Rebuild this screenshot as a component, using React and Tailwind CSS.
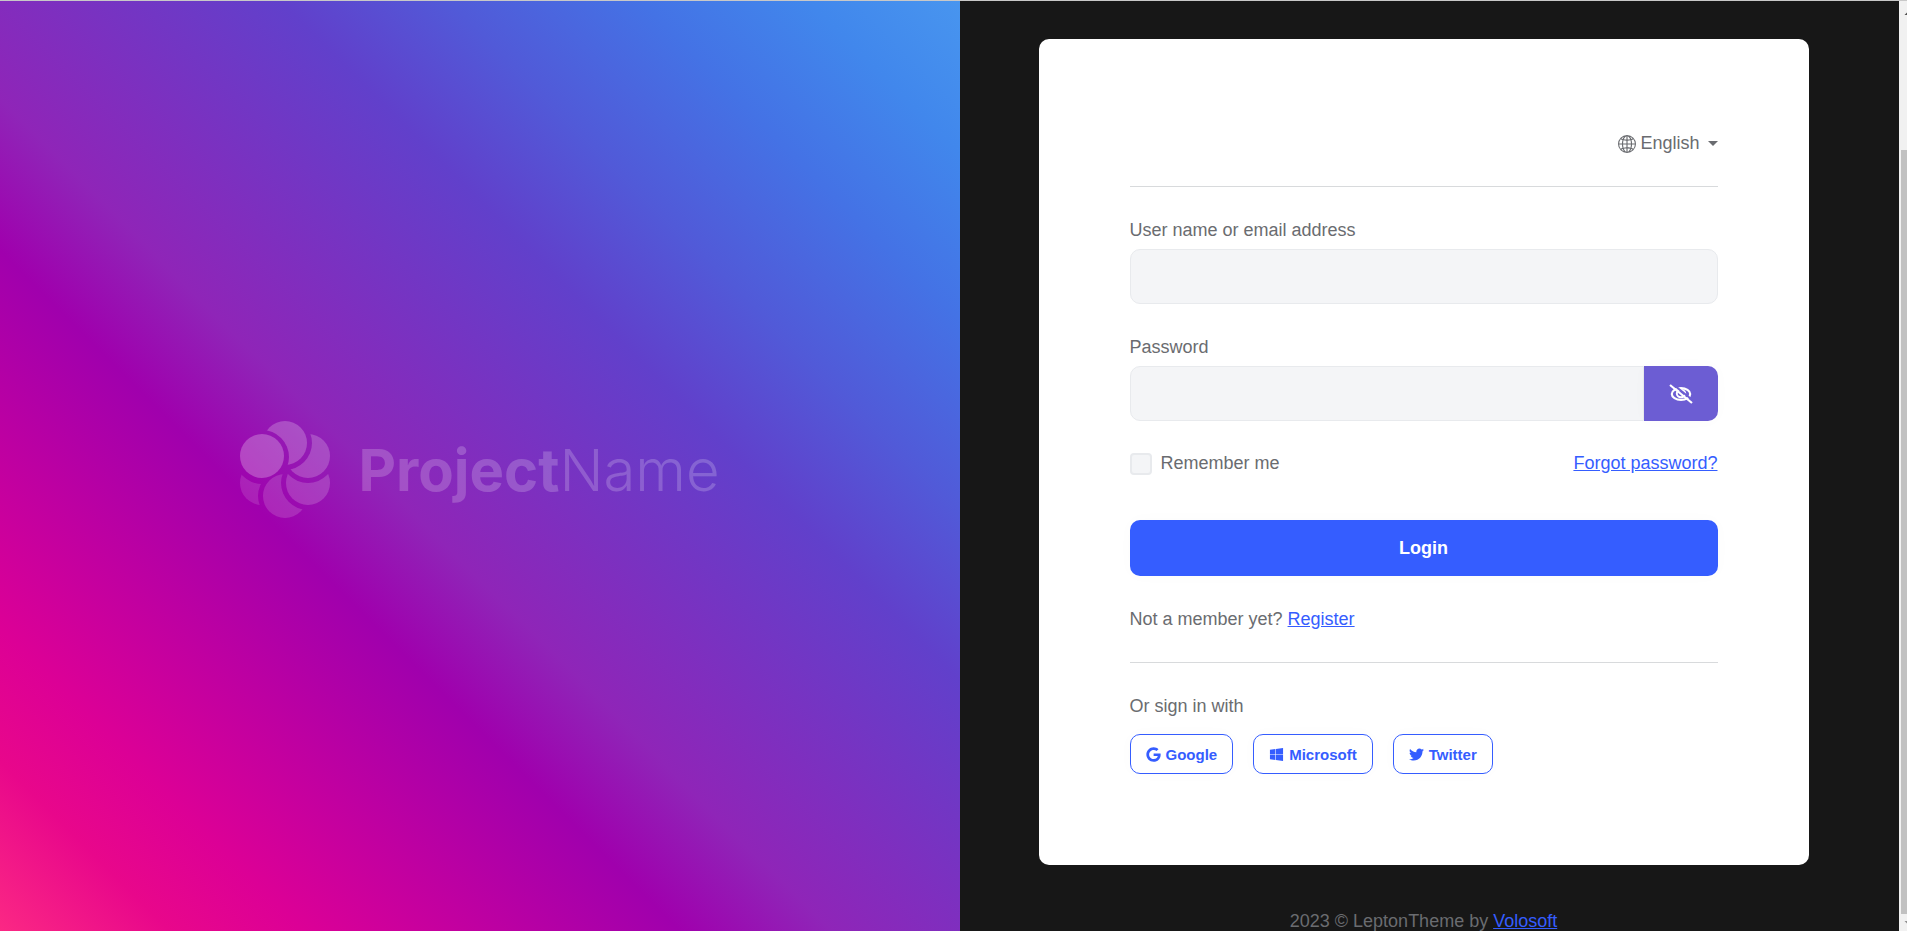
import { FaGoogle, FaWindows, FaTwitter } from "react-icons/fa";
import { BsGlobe2 } from "react-icons/bs";

const link = "text-[#355dff] underline";
const field = "h-[55px] w-full border border-[#e8eaed] bg-[#f4f5f7] px-4 outline-none";
const providers = [
  { name: "Google", Icon: FaGoogle },
  { name: "Microsoft", Icon: FaWindows },
  { name: "Twitter", Icon: FaTwitter },
];

function BrandMark() {
  return (
    <svg viewBox="0 0 90 98" className="h-[98px] w-[90px]" fill="#fff" aria-hidden="true">
      <defs>
        <mask id="m1" maskUnits="userSpaceOnUse" x="0" y="0" width="90" height="98">
          <rect width="90" height="98" fill="#fff" />
          <circle cx="22" cy="36" r="27" fill="#000" />
        </mask>
        <mask id="m2" maskUnits="userSpaceOnUse" x="0" y="0" width="90" height="98">
          <rect width="90" height="98" fill="#fff" />
          <circle cx="45" cy="22" r="27" fill="#000" />
        </mask>
        <mask id="m3" maskUnits="userSpaceOnUse" x="0" y="0" width="90" height="98">
          <rect width="90" height="98" fill="#fff" />
          <circle cx="68" cy="35" r="27" fill="#000" />
        </mask>
        <mask id="m4" maskUnits="userSpaceOnUse" x="0" y="0" width="90" height="98">
          <rect width="90" height="98" fill="#fff" />
          <circle cx="68" cy="62" r="27" fill="#000" />
        </mask>
        <mask id="m5" maskUnits="userSpaceOnUse" x="0" y="0" width="90" height="98">
          <rect width="90" height="98" fill="#fff" />
          <circle cx="45" cy="75" r="27" fill="#000" />
          <circle cx="22" cy="36" r="27" fill="#000" />
        </mask>
      </defs>
      <circle cx="22" cy="35" r="22" opacity=".25" />
      <circle cx="45" cy="22" r="22" opacity=".22" mask="url(#m1)" />
      <circle cx="68" cy="35" r="22" opacity=".2" mask="url(#m2)" />
      <circle cx="68" cy="62" r="22" opacity=".17" mask="url(#m3)" />
      <circle cx="45" cy="75" r="22" opacity=".14" mask="url(#m4)" />
      <circle cx="22" cy="62" r="22" opacity=".12" mask="url(#m5)" />
    </svg>
  );
}

function EyeSlash() {
  return (
    <svg viewBox="0 0 24 20" className="h-5 w-6" fill="none" stroke="#fff" strokeWidth="2.2" aria-hidden="true">
      <ellipse cx="12" cy="10" rx="9.2" ry="5.9" />
      <ellipse cx="12" cy="9.6" rx="4.2" ry="3.6" strokeWidth="2" />
      <path d="M3 -0.6 L25 17.4" stroke="#6c5dd3" strokeWidth="2" />
      <path d="M1 1 L23 19" />
    </svg>
  );
}

export default function App() {
  return (
    <div className="flex h-screen overflow-hidden border-t border-[#c8c8c8] bg-[#171717] font-['Liberation_Sans',Arial,sans-serif] text-lg leading-[27px] text-[#6a6c70]">
      <section className="flex w-[960px] max-w-[51%] shrink-0 items-center justify-center bg-[linear-gradient(45deg,#fb2884_0%,#e8078b_9%,#dc0096_16%,#a000ad_36%,#8f25b8_44%,#6140cb_64%,#515ad8_73%,#4472e5_83%,#4187ec_92%,#4895ef_100%)] pt-2">
        <div className="flex items-center gap-7">
          <BrandMark />
          <div className="font-['Inter',sans-serif] text-[58px] leading-[98px] text-white/20">
            <span className="font-bold">Project</span>
            <span className="font-light">Name</span>
          </div>
        </div>
      </section>

      <main className="flex min-w-0 flex-1 flex-col items-center pt-[38px] pr-3">
        <div className="w-full max-w-[770px] shrink-0 rounded-[10px] bg-white p-[91px]">
          <div className="flex justify-end border-b border-[#d8dadc] pb-[29px]">
            <button type="button" className="flex items-center gap-1">
              <BsGlobe2 className="size-[18px]" />
              <span>English</span>
              <span className="ml-1 border-x-[5px] border-t-[5px] border-x-transparent border-t-current" />
            </button>
          </div>

          <form className="pt-[30px]">
            <label htmlFor="user" className="block pb-[5px]">User name or email address</label>
            <input id="user" type="text" className={`${field} block rounded-[10px]`} />

            <label htmlFor="password" className="block pt-[30px] pb-[5px]">Password</label>
            <div className="flex">
              <input id="password" type="password" className={`${field} min-w-0 flex-1 rounded-l-[10px]`} />
              <button type="button" aria-label="Show password" className="flex w-[74px] items-center justify-center rounded-r-[10px] bg-[#6c5dd3] shadow-[0_0_16px_rgba(0,0,0,0.02)]">
                <EyeSlash />
              </button>
            </div>

            <div className="flex items-center justify-between pt-[29px]">
              <label className="flex items-center gap-[9px]">
                <input type="checkbox" className="size-[22px] appearance-none rounded border-2 border-[#e8eaed] bg-[#f4f5f7]" />
                Remember me
              </label>
              <a href="#forgot" className={link}>Forgot password?</a>
            </div>

            <button type="submit" className="mt-[43px] block h-14 w-full rounded-[10px] bg-[#355dff] font-bold text-white shadow-[0_0_16px_rgba(0,0,0,0.02)]">
              Login
            </button>
          </form>

          <p className="border-b border-[#d8dadc] pt-[30px] pb-[29px]">
            Not a member yet? <a href="#register" className={link}>Register</a>
          </p>

          <p className="pt-[30px]">Or sign in with</p>
          <div className="flex gap-5 pt-[14px]">
            {providers.map(({ name, Icon }) => (
              <button key={name} type="button" className="flex h-10 items-center gap-[5px] rounded-[10px] border border-[#355dff] px-[15px] text-[15px] font-bold text-[#355dff] shadow-[0_0_16px_rgba(0,0,0,0.02)]">
                <Icon className="size-[15px]" />
                {name}
              </button>
            ))}
          </div>
        </div>
        <footer className="pt-[43px] whitespace-nowrap">
          2023 © LeptonTheme by <a href="#volosoft" className={link}>Volosoft</a>
        </footer>
      </main>

      <div className="flex w-2 shrink-0 flex-col bg-[#f1f1f1] pl-0.5" aria-hidden="true">
        <svg viewBox="0 0 6 149" className="h-[149px] w-1.5 shrink-0">
          <path d="M3.5 14 L7.5 10 V14 Z" fill="#505050" />
        </svg>
        <div className="flex-1 bg-[#c1c1c1]" />
        <svg viewBox="0 0 6 17" className="h-[17px] w-1.5 shrink-0">
          <path d="M3.5 7 L7.5 11 V7 Z" fill="#909090" />
        </svg>
      </div>
    </div>
  );
}
